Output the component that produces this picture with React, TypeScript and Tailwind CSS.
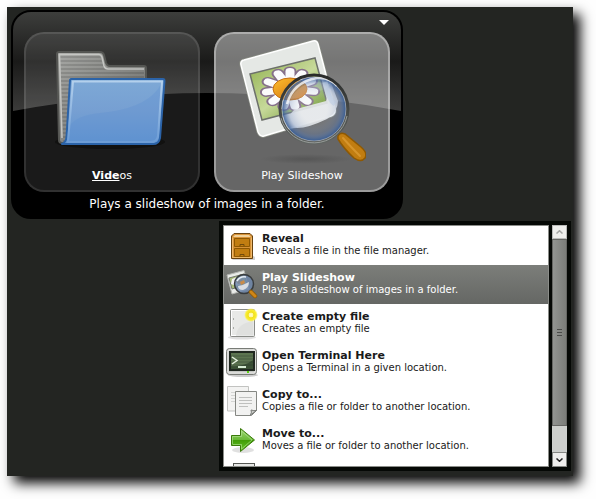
import React from "react";

function FolderIcon() {
  return (
    <svg className="h-32 w-32" viewBox="48 36 128 128" aria-hidden="true">
      <defs>
        <linearGradient id="fBack" x1="0" y1="0" x2="1" y2="1">
          <stop offset="0" stopColor="#a6a7a4" />
          <stop offset="0.5" stopColor="#868784" />
          <stop offset="1" stopColor="#666764" />
        </linearGradient>
        <linearGradient id="fFront" x1="0" y1="0" x2="0" y2="1">
          <stop offset="0" stopColor="#7ea9d6" />
          <stop offset="0.5" stopColor="#769fd2" />
          <stop offset="1" stopColor="#5f94d0" />
        </linearGradient>
        <linearGradient id="fEdge" x1="0" y1="0" x2="0" y2="1">
          <stop offset="0" stopColor="#b4d0ec" />
          <stop offset="1" stopColor="#6d9dd6" />
        </linearGradient>
        <pattern id="fLines" width="6" height="4" patternUnits="userSpaceOnUse">
          <rect width="6" height="2" fill="#000" opacity="0.12" />
        </pattern>
      </defs>
      <ellipse cx="110" cy="142" rx="55" ry="7" fill="#111110" />
      <path d="M59 52H100Q103 52 104 55L106 63Q107 66 110 66H144Q146 66 146 68V143H62Q59 143 59 140L57 54Q57 52 59 52Z" fill="url(#fBack)" stroke="#555653" strokeWidth="2" />
      <path d="M60 56H100L104 68H144V142H63Z" fill="url(#fLines)" />
      <path d="M62 138L59.500 54.500H99Q101 54.500 102 57L104 66Q105 69 108 69H144" fill="none" stroke="#c5c6c3" strokeWidth="1.500" />
      <path d="M71 79H163Q164.500 79 164.500 81L160 138Q159 144 153 144H62Q66 142 66.500 137L70 80Z" fill="url(#fFront)" stroke="#2b63a8" strokeWidth="2" strokeLinejoin="round" />
      <path d="M69 127Q76 115 100 113Q143 109 158 89L161 84L157 142H67Z" fill="#5d8dcf" opacity="0.3" />
      <path d="M73 81.500H162L158 136Q157 142 151 142H68L73 81.500Z" fill="none" stroke="url(#fEdge)" strokeWidth="2" />
    </svg>
  );
}

function SlideshowIcon() {
  const petals = [8, 44, 78, 105, 136, 170, 204, 240, 270, 300, 334];
  return (
    <svg className="h-32 w-32" viewBox="238 36 128 128" aria-hidden="true">
      <defs>
        <linearGradient id="sGreen" x1="0" y1="0" x2="1" y2="1">
          <stop offset="0" stopColor="#8fb04c" />
          <stop offset="0.5" stopColor="#c7d99a" />
          <stop offset="1" stopColor="#5c8a1d" />
        </linearGradient>
        <linearGradient id="sCore" x1="0" y1="0" x2="1" y2="1">
          <stop offset="0" stopColor="#ffc02d" />
          <stop offset="1" stopColor="#c8640d" />
        </linearGradient>
        <linearGradient id="sRim" x1="0" y1="0" x2="0" y2="1">
          <stop offset="0" stopColor="#292b2a" />
          <stop offset="1" stopColor="#606562" />
        </linearGradient>
        <radialGradient id="sGlass">
          <stop offset="0.4" stopColor="#d9e1e9" stopOpacity="0.1" />
          <stop offset="0.78" stopColor="#718cba" stopOpacity="0.35" />
          <stop offset="1" stopColor="#355b94" stopOpacity="0.95" />
        </radialGradient>
        <radialGradient id="sShade">
          <stop offset="0" stopColor="#4b4b4b" stopOpacity="0.6" />
          <stop offset="1" stopColor="#4b4b4b" stopOpacity="0" />
        </radialGradient>
        <clipPath id="sPhoto">
          <path d="M251 74L315 59L327 103L263 119Z" />
        </clipPath>
      </defs>
      <ellipse cx="306" cy="159" rx="46" ry="5" fill="url(#sShade)" />
      <path d="M244 60L313 41Q317 40 318 44L335 109Q336 114 331 116L264 136Q260 137 258 132L241 65Q240 61 244 60Z" fill="#e5e8e5" stroke="#898d84" strokeWidth="3" />
      <path d="M244 60L313 41Q317 40 318 44L335 109Q336 114 331 116L264 136Q260 137 258 132L241 65Q240 61 244 60Z" fill="#e5e8e5" stroke="#ffffff" strokeWidth="1.500" />
      <path d="M250 74L315 58L327 103L262 120Z" fill="url(#sGreen)" stroke="#6d716b" strokeWidth="1.500" />
      <g clipPath="url(#sPhoto)">
        {petals.map((angle) => (
          <g key={angle} transform={`translate(290 89) scale(1 .74) rotate(${angle})`}>
            <path d="M8 0L24 0" stroke="#86708a" strokeWidth="13" strokeLinecap="round" />
          </g>
        ))}
        {petals.map((angle) => (
          <g key={angle} transform={`translate(290 89) scale(1 .74) rotate(${angle})`}>
            <path d="M16 0L24 0" stroke="#fbfbfc" strokeWidth="9" strokeLinecap="round" />
          </g>
        ))}
        <ellipse cx="290" cy="89" rx="17" ry="11" fill="url(#sCore)" stroke="#c56e11" />
      </g>
      <path d="M338 136Q340 132 345 134L361 147Q368 153 365 158Q361 163 354 158Q344 149 338 139Z" fill="#c17d11" stroke="#8f5902" strokeWidth="1.500" />
      <path d="M343 138Q350 146 360 156" fill="none" stroke="#d6952c" strokeWidth="2" strokeLinecap="round" />
      <path d="M290 116Q292 109 300 108L326 101Q330 91 326 80L330 80L338 101Q338 111 327 119Q302 131 291 127Z" fill="#e8eaec" opacity="0.9" />
      <circle cx="314" cy="109" r="32" fill="url(#sGlass)" />
      <path d="M287 104Q293 82 317 78Q330 77 337 86" fill="none" stroke="#ffffff" strokeWidth="2.500" opacity="0.75" />
      <path d="M290 99Q300 83 318 82L330 84Q327 91 316 91L299 98Z" fill="#f6faff" opacity="0.15" />
      <path d="M325 82Q328 99 335 104" fill="none" stroke="#b8c9e4" strokeWidth="5" opacity="0.5" />
      <circle cx="314" cy="109" r="32" fill="none" stroke="#d2d6da" strokeWidth="1" opacity="0.5" />
      <circle cx="314" cy="109" r="34" fill="none" stroke="url(#sRim)" strokeWidth="3" />
      <path d="M281 118A34 34 0 0 0 347 116" fill="none" stroke="#979b98" strokeWidth="1" />
    </svg>
  );
}

function SmallSlideshowIcon() {
  return (
    <svg className="h-8 w-8" viewBox="0 0 32 32" aria-hidden="true">
      <path d="M1 6L18 1.500L23 20L6 25Z" fill="#e9ebe8" stroke="#b5b7b3" />
      <path d="M3 9L18 5L21 15L6 20Z" fill="#a9bd78" stroke="#747970" />
      <path d="M6 10L11 8L12 12L16 9L15 15L10 17L5 15Z" fill="#f1f0f4" />
      <path d="M10 12L16 10L17 14L12 15Z" fill="#cf842b" />
      <circle cx="18" cy="15" r="9.500" fill="#6f87aa" fillOpacity="0.85" stroke="#383b3d" strokeWidth="1.500" />
      <path d="M12 17Q18 16 23 13Q23 19 17 21Q12 21 12 17Z" fill="#d9dde3" />
      <path d="M14 13L18 11L19 14L15 16Z" fill="#c98b4a" />
      <path d="M11 12Q14 7 20 8" fill="none" stroke="#e8eff8" strokeWidth="1.500" />
      <path d="M25 23L29 27" stroke="#8f5902" strokeWidth="4.500" strokeLinecap="round" />
      <path d="M25 23L29 27" stroke="#cf8618" strokeWidth="3" strokeLinecap="round" />
    </svg>
  );
}

function CabinetIcon() {
  return (
    <svg className="h-8 w-8" viewBox="0 0 32 32" aria-hidden="true">
      <path d="M6 30H29V27L26 25V6Z" fill="#000" opacity="0.18" />
      <path d="M5.500 28.500V6L8 3.500H24L26.500 6V28.500Z" fill="#d89338" stroke="#68420f" />
      <path d="M7 7L9 5H23L25 7Z" fill="#f1d29b" />
      <path d="M6.500 7.500V27.500H25.500V7.500" fill="none" stroke="#edb869" />
      <path d="M8.500 8.500H23.500V16.500H8.500ZM8.500 18.500H23.500V26.500H8.500Z" fill="#c17d11" stroke="#8f5902" />
      <path d="M14 16V14.500H18V16M14 26V24.500H18V26" fill="none" stroke="#704a0d" />
    </svg>
  );
}

function NewFileIcon() {
  return (
    <svg className="h-8 w-8" viewBox="0 0 32 32" aria-hidden="true">
      <defs>
        <radialGradient id="nGlow">
          <stop offset="0" stopColor="#fffbd0" />
          <stop offset="0.32" stopColor="#fff89a" />
          <stop offset="0.38" stopColor="#f2df18" />
          <stop offset="0.75" stopColor="#f9ee35" />
          <stop offset="1" stopColor="#fff45a" stopOpacity="0" />
        </radialGradient>
      </defs>
      <ellipse cx="16" cy="29.500" rx="14" ry="2" fill="#000" opacity="0.12" />
      <rect x="4.500" y="1.500" width="24" height="27" rx="1" fill="#e8e9e7" stroke="#8a8c88" />
      <rect x="5.500" y="2.500" width="22" height="25" fill="none" stroke="#fff" />
      <path d="M10 28Q11 15 28 13V28Z" fill="#d9dad8" opacity="0.6" />
      <path d="M7.500 10V12M7.500 19V21" stroke="#a9aba7" />
      <circle cx="25" cy="7" r="7" fill="url(#nGlow)" />
    </svg>
  );
}

function TerminalIcon() {
  return (
    <svg className="h-8 w-8" viewBox="0 0 32 32" aria-hidden="true">
      <ellipse cx="17" cy="28" rx="15" ry="2" fill="#000" opacity="0.2" />
      <rect x="0.500" y="1.500" width="30" height="26" rx="3" fill="#c5c7c4" stroke="#787b76" />
      <rect x="2" y="3" width="27" height="23" rx="1" fill="none" stroke="#eeeeec" />
      <rect x="4" y="5" width="24" height="18" fill="#3a5035" stroke="#202820" strokeWidth="2" />
      <path d="M5 6H27V13Q18 20 5 19Z" fill="#92aa7a" opacity="0.4" />
      <path d="M5 9H27M5 12H27M5 15H27M5 18H27" stroke="#29372a" opacity="0.4" />
      <path d="M6 10L11 13.500L6 17" fill="none" stroke="#e5f0df" strokeWidth="1.500" />
      <path d="M12 20H20" stroke="#d5ead2" strokeWidth="2" />
      <path d="M21 25H23" stroke="#5bd313" strokeWidth="2" />
    </svg>
  );
}

function CopyIcon() {
  return (
    <svg className="h-8 w-8" viewBox="0 0 32 32" aria-hidden="true">
      <path d="M1.500 0.500H22.500V25H1.500Z" fill="#f3f3f2" stroke="#c2c3c1" />
      <path d="M5 6.500H18M5 9.500H18M5 12.500H18M5 15.500H18" stroke="#d4d5d3" />
      <path d="M9.500 5.500H30.500V24.500L25.500 29.500H9.500Z" fill="#f2f2f1" stroke="#858783" />
      <path d="M13 11.500H26M13 14.500H26M13 17.500H26M13 20.500H22" stroke="#bfc0be" />
      <path d="M24.500 29Q26 26 25 24Q28 25 30.500 24.500Z" fill="#c9cbc8" stroke="#777975" />
    </svg>
  );
}

function MoveIcon() {
  return (
    <svg className="h-8 w-8" viewBox="0 0 32 32" aria-hidden="true">
      <defs>
        <linearGradient id="mGreen" x1="0" y1="0" x2="0" y2="1">
          <stop offset="0" stopColor="#a0d773" />
          <stop offset="0.5" stopColor="#69b936" />
          <stop offset="0.52" stopColor="#429d08" />
          <stop offset="1" stopColor="#67c62a" />
        </linearGradient>
      </defs>
      <ellipse cx="17" cy="25" rx="11" ry="3" fill="#000" opacity="0.12" />
      <path d="M5.500 10.500H14.500V3.500L28.500 15L14.500 26.500V20.500H5.500Z" fill="url(#mGreen)" stroke="#3a7b0a" />
      <path d="M6.500 19V11.500H15.500V6L26 15L15.500 24V19.500H6.500" fill="none" stroke="#b6e59a" opacity="0.6" />
    </svg>
  );
}

function NextFileIcon() {
  return (
    <svg className="h-8 w-8" viewBox="0 0 32 32" aria-hidden="true">
      <rect x="7.500" y="2.500" width="21" height="25" fill="#e6e7e5" stroke="#555753" />
    </svg>
  );
}

const actions = [
  { title: "Reveal", detail: "Reveals a file in the file manager.", icon: <CabinetIcon /> },
  { title: "Play Slideshow", detail: "Plays a slideshow of images in a folder.", icon: <SmallSlideshowIcon />, selected: true },
  { title: "Create empty file", detail: "Creates an empty file", icon: <NewFileIcon /> },
  { title: "Open Terminal Here", detail: "Opens a Terminal in a given location.", icon: <TerminalIcon /> },
  { title: "Copy to...", detail: "Copies a file or folder to another location.", icon: <CopyIcon /> },
  { title: "Move to...", detail: "Moves a file or folder to another location.", icon: <MoveIcon /> },
];

function Launcher() {
  return (
    <section className="relative w-fit overflow-hidden rounded-[20px] border-2 border-black bg-black px-[11px] pt-1 pb-[5px]">
      <svg className="absolute inset-x-0 top-0 h-[100px] w-full" viewBox="0 0 388 100" preserveAspectRatio="none" aria-hidden="true">
        <defs>
          <linearGradient id="gloss" x1="0" y1="0" x2="0" y2="1">
            <stop offset="0" stopColor="#3d3e3c" />
            <stop offset="0.5" stopColor="#1a1a19" />
            <stop offset="1" stopColor="#3b3b3a" />
          </linearGradient>
        </defs>
        <path d="M0 0H388V99Q194 63 0 99Z" fill="url(#gloss)" />
      </svg>
      <div className="relative">
        <div className="flex h-4 justify-end">
          <button type="button" aria-label="Open menu" className="flex h-3 w-3 items-center justify-center">
            <svg className="h-[5px] w-[10px]" viewBox="0 0 10 5" aria-hidden="true"><path d="M0 0H10L5 5Z" fill="#fff" /></svg>
          </button>
        </div>
        <div className="flex gap-[14px]">
          <button type="button" className="flex w-[176px] flex-col items-center rounded-[20px] border-2 border-white/10 bg-white/10 pt-[2px] pb-[6px]">
            <FolderIcon />
            <span className="mt-1 text-[11px] leading-4"><b className="underline">Vide</b>os</span>
          </button>
          <button type="button" className="flex w-[176px] flex-col items-center rounded-[20px] border-2 border-white/35 bg-white/40 pt-[2px] pb-[6px]">
            <SlideshowIcon />
            <span className="mt-1 text-[11px] leading-4">Play Slideshow</span>
          </button>
        </div>
        <p className="mt-1 text-center text-[12px] leading-4">Plays a slideshow of images in a folder.</p>
      </div>
    </section>
  );
}

function Scrollbar() {
  return (
    <div className="flex w-[15px] flex-col bg-[#cdcfcc]">
      <button type="button" aria-label="Scroll up" className="flex h-[14px] items-center justify-center border border-[#b9bab8] bg-[#eeeeec]">
        <svg className="h-1 w-[7px]" viewBox="0 0 7 4" aria-hidden="true"><path d="M.5 3.500L3.500 .7L6.500 3.500" fill="none" stroke="#a5a6a4" strokeWidth="1.500" /></svg>
      </button>
      <div className="flex h-[187px] flex-col items-center justify-center gap-[2px] border border-[#656663] bg-linear-to-r from-[#929491] to-[#7b7d79]">
        <span className="h-px w-[5px] bg-[#4a4b49]" />
        <span className="h-px w-[5px] bg-[#4a4b49]" />
        <span className="h-px w-[5px] bg-[#4a4b49]" />
      </div>
      <button type="button" aria-label="Scroll down" className="mt-auto flex h-[15px] items-center justify-center border border-[#858783] bg-[#eeeeec]">
        <svg className="h-1 w-[7px]" viewBox="0 0 7 4" aria-hidden="true"><path d="M.5 .5L3.500 3.300L6.500 .5" fill="none" stroke="#222" strokeWidth="1.500" /></svg>
      </button>
    </div>
  );
}

function ActionList() {
  return (
    <section className="mt-[2px] mr-[2px] ml-auto flex h-[250px] w-[352px] gap-[3px] border-4 border-[#050805] bg-[#050805]">
      <ul className="min-w-0 flex-1 overflow-hidden border border-[#8b8d89] bg-white text-[#1a1a1a]">
        {actions.map((action) => (
          <li key={action.title}>
            <button
              type="button"
              className={`flex h-[39px] w-full items-center gap-1 px-[2px] text-left ${action.selected ? "bg-linear-to-b from-[#7c7e7a] to-[#656764] text-white" : ""}`}
            >
              {action.icon}
              <span className="flex flex-col pb-[2px]">
                <b className="text-[11px] leading-[13px]">{action.title}</b>
                <span className="text-[10px] leading-3">{action.detail}</span>
              </span>
            </button>
          </li>
        ))}
        <li className="px-[2px] pt-[1px]"><NextFileIcon /></li>
      </ul>
      <Scrollbar />
    </section>
  );
}

export default function App() {
  return (
    <div className="bg-[#fefefe] pt-[7px] pr-[23px] pb-[23px] pl-[7px] font-['DejaVu_Sans',sans-serif] text-white">
      <main className="bg-[#232522] pt-[3px] pb-[5px] pl-1 shadow-[7px_7px_12px_#000000]">
        <Launcher />
        <ActionList />
      </main>
    </div>
  );
}
